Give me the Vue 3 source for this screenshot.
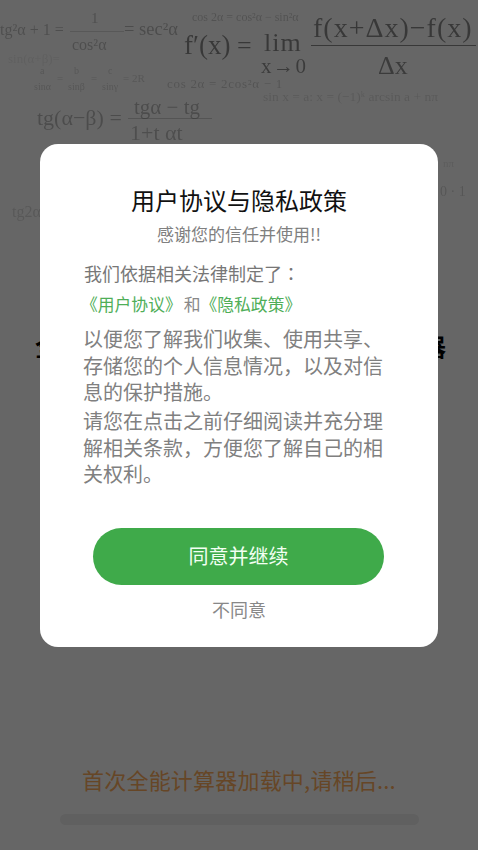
<script setup>
// 背景公式：自由画布上的内容，按坐标摆放
const formulas = [
  { text: "tg²α + 1 =", x: 0, y: 30, size: 16, alpha: 0.24 },
  { text: "1", x: 91, y: 18, size: 15, alpha: 0.24 },
  { text: "cos²α", x: 72, y: 45, size: 16, alpha: 0.24 },
  { text: "= sec²α", x: 124, y: 29, size: 18.5, alpha: 0.26 },
  { text: "cos 2α = cos²α − sin²α", x: 192, y: 17, size: 12, alpha: 0.2 },
  { text: "f′(x)", x: 184, y: 45, size: 27, alpha: 0.45 },
  { text: "=", x: 237, y: 46, size: 26, alpha: 0.45 },
  { text: "lim", x: 264, y: 43, size: 26, alpha: 0.45, spacing: 1 },
  { text: "x→0", x: 261, y: 66, size: 21, alpha: 0.42, spacing: 1.5 },
  { text: "f(x+Δx)−f(x)", x: 313, y: 28, size: 28, alpha: 0.45, spacing: 1 },
  { text: "Δx", x: 378, y: 66, size: 26, alpha: 0.42 },
  { text: "sin(α+β)=", x: 8, y: 58, size: 13, alpha: 0.07 },
  { text: "a", x: 40, y: 71, size: 10, alpha: 0.16 },
  { text: "sinα", x: 34, y: 87, size: 10, alpha: 0.16 },
  { text: "=", x: 57, y: 78, size: 11, alpha: 0.16 },
  { text: "b", x: 74, y: 71, size: 10, alpha: 0.16 },
  { text: "sinβ", x: 68, y: 87, size: 10, alpha: 0.16 },
  { text: "=", x: 91, y: 78, size: 11, alpha: 0.16 },
  { text: "c", x: 108, y: 71, size: 10, alpha: 0.16 },
  { text: "sinγ", x: 102, y: 87, size: 10, alpha: 0.16 },
  { text: "= 2R", x: 123, y: 78, size: 11, alpha: 0.16 },
  { text: "cos 2α = 2cos²α − 1", x: 167, y: 83, size: 13, alpha: 0.18, spacing: 0.7 },
  { text: "sin x = a:  x = (−1)ᵏ arcsin a + nπ", x: 263, y: 97, size: 13.5, alpha: 0.13 },
  { text: "tg(α−β) =", x: 37, y: 118, size: 22, alpha: 0.26 },
  { text: "tgα − tg", x: 134, y: 107, size: 21, alpha: 0.26 },
  { text: "1+t  αt", x: 130, y: 133, size: 22, alpha: 0.24 },
  { text: "tg2α", x: 12, y: 212, size: 16, alpha: 0.14 },
  { text: "nπ", x: 443, y: 163, size: 11, alpha: 0.1 },
  { text: "0 · 1", x: 440, y: 192, size: 14, alpha: 0.16 },
];

const rules = [
  { x: 70, y: 31, w: 54, alpha: 0.14 },
  { x: 311, y: 45, w: 165, alpha: 0.45 },
  { x: 128, y: 118, w: 84, alpha: 0.18 },
];

const formulaStyle = (f) => ({
  left: f.x + "px",
  top: f.y + "px",
  fontSize: f.size + "px",
  letterSpacing: (f.spacing || 0) + "px",
  opacity: f.alpha,
});

const ruleStyle = (r) => ({
  left: r.x + "px",
  top: r.y + "px",
  width: r.w + "px",
  opacity: r.alpha,
});
</script>

<template>
  <div class="page">
    <div class="formulas">
      <span v-for="f in formulas" :key="f.text + f.x" class="formula" :style="formulaStyle(f)">{{ f.text }}</span>
      <i v-for="r in rules" :key="r.x" class="rule" :style="ruleStyle(r)"></i>
    </div>

    <div class="app-title">
      <span>全</span>
      <span>器</span>
    </div>

    <div class="loading">
      <p class="loading-text">首次全能计算器加载中,请稍后...</p>
      <div class="progress"></div>
    </div>

    <div class="mask">
      <div class="dialog">
        <h1 class="title">用户协议与隐私政策</h1>
        <p class="subtitle">感谢您的信任并使用!!</p>
        <p class="intro">我们依据相关法律制定了<span class="colon">：</span></p>
        <p class="links">
          <a class="link">《用户协议》</a>和<a class="link">《隐私政策》</a>
        </p>
        <p class="para first">以便您了解我们收集、使用共享、存储您的个人信息情况，以及对信息的保护措施。</p>
        <p class="para second">请您在点击之前仔细阅读并充分理解相关条款，方便您了解自己的相关权利。</p>
        <button class="agree">同意并继续</button>
        <button class="refuse">不同意</button>
      </div>
    </div>
  </div>
</template>

<style>
html,
body {
  margin: 0;
  background: #fff;
}
</style>

<style scoped>
.page {
  position: relative;
  width: 478px;
  height: 850px;
  overflow: hidden;
  display: flex;
  flex-direction: column;
  background: #fff;
  font-family: "Noto Sans CJK SC", "Liberation Sans", sans-serif;
}

.formulas {
  position: absolute;
  inset: 0;
  font-family: "Liberation Serif", serif;
  color: #000;
  filter: blur(0.4px);
}

.formula {
  position: absolute;
  line-height: 1;
  white-space: nowrap;
  transform: translateY(-50%);
}

.rule {
  position: absolute;
  height: 1px;
  background: #000;
}

.app-title {
  display: flex;
  justify-content: space-between;
  margin-top: 333px;
  padding: 0 32px 0 35px;
  font-size: 24px;
  line-height: 26px;
  font-weight: 700;
  color: #000;
}

.loading {
  margin-top: auto;
  padding-bottom: 25px;
  display: flex;
  flex-direction: column;
  align-items: center;
}

.loading-text {
  margin: 0;
  font-size: 22px;
  line-height: 30px;
  letter-spacing: 0.2px;
  color: #ffb060;
}

.progress {
  width: 359px;
  height: 11px;
  margin-top: 20px;
  border-radius: 6px;
  background: #f0f0f0;
}

.mask {
  position: absolute;
  inset: 0;
  padding: 144px 40px 0;
  background: rgba(0, 0, 0, 0.6);
}

.dialog {
  display: flex;
  flex-direction: column;
  height: 503px;
  box-sizing: border-box;
  padding-top: 40px;
  border-radius: 18px;
  background: #fff;
}

.title {
  margin: 0;
  font-size: 24px;
  line-height: 32px;
  font-weight: 400;
  text-align: center;
  color: #111;
}

.subtitle {
  margin: 6px 0 0;
  font-size: 17px;
  line-height: 24px;
  text-align: center;
  color: #808080;
}

.intro {
  margin: 14px 44px 0;
  font-size: 18px;
  line-height: 26px;
  color: #777;
}

.colon {
  font-family: "Noto Sans CJK TC", sans-serif;
}

.links {
  margin: 6px 44px 0 41px;
  font-size: 16.8px;
  line-height: 24px;
  color: #888;
}

.link {
  color: #4fae58;
}

.link:first-child {
  margin-right: 2px;
}

.para {
  margin: 0 43px;
  width: 300px;
  font-size: 20px;
  line-height: 26.5px;
  color: #808080;
}

.para.first {
  margin-top: 10px;
}

.para.second {
  margin-top: 2.5px;
}

.agree {
  align-self: flex-start;
  width: 291px;
  height: 57px;
  margin: 40px 0 0 53px;
  padding: 0 0 2px;
  border: 0;
  border-radius: 29px;
  background: #3faa4a;
  color: #f2fff2;
  font: inherit;
  font-size: 20px;
}

.refuse {
  align-self: center;
  margin-top: 11px;
  padding: 0;
  border: 0;
  background: none;
  color: #888;
  font: inherit;
  font-size: 18px;
  line-height: 26px;
}
</style>
